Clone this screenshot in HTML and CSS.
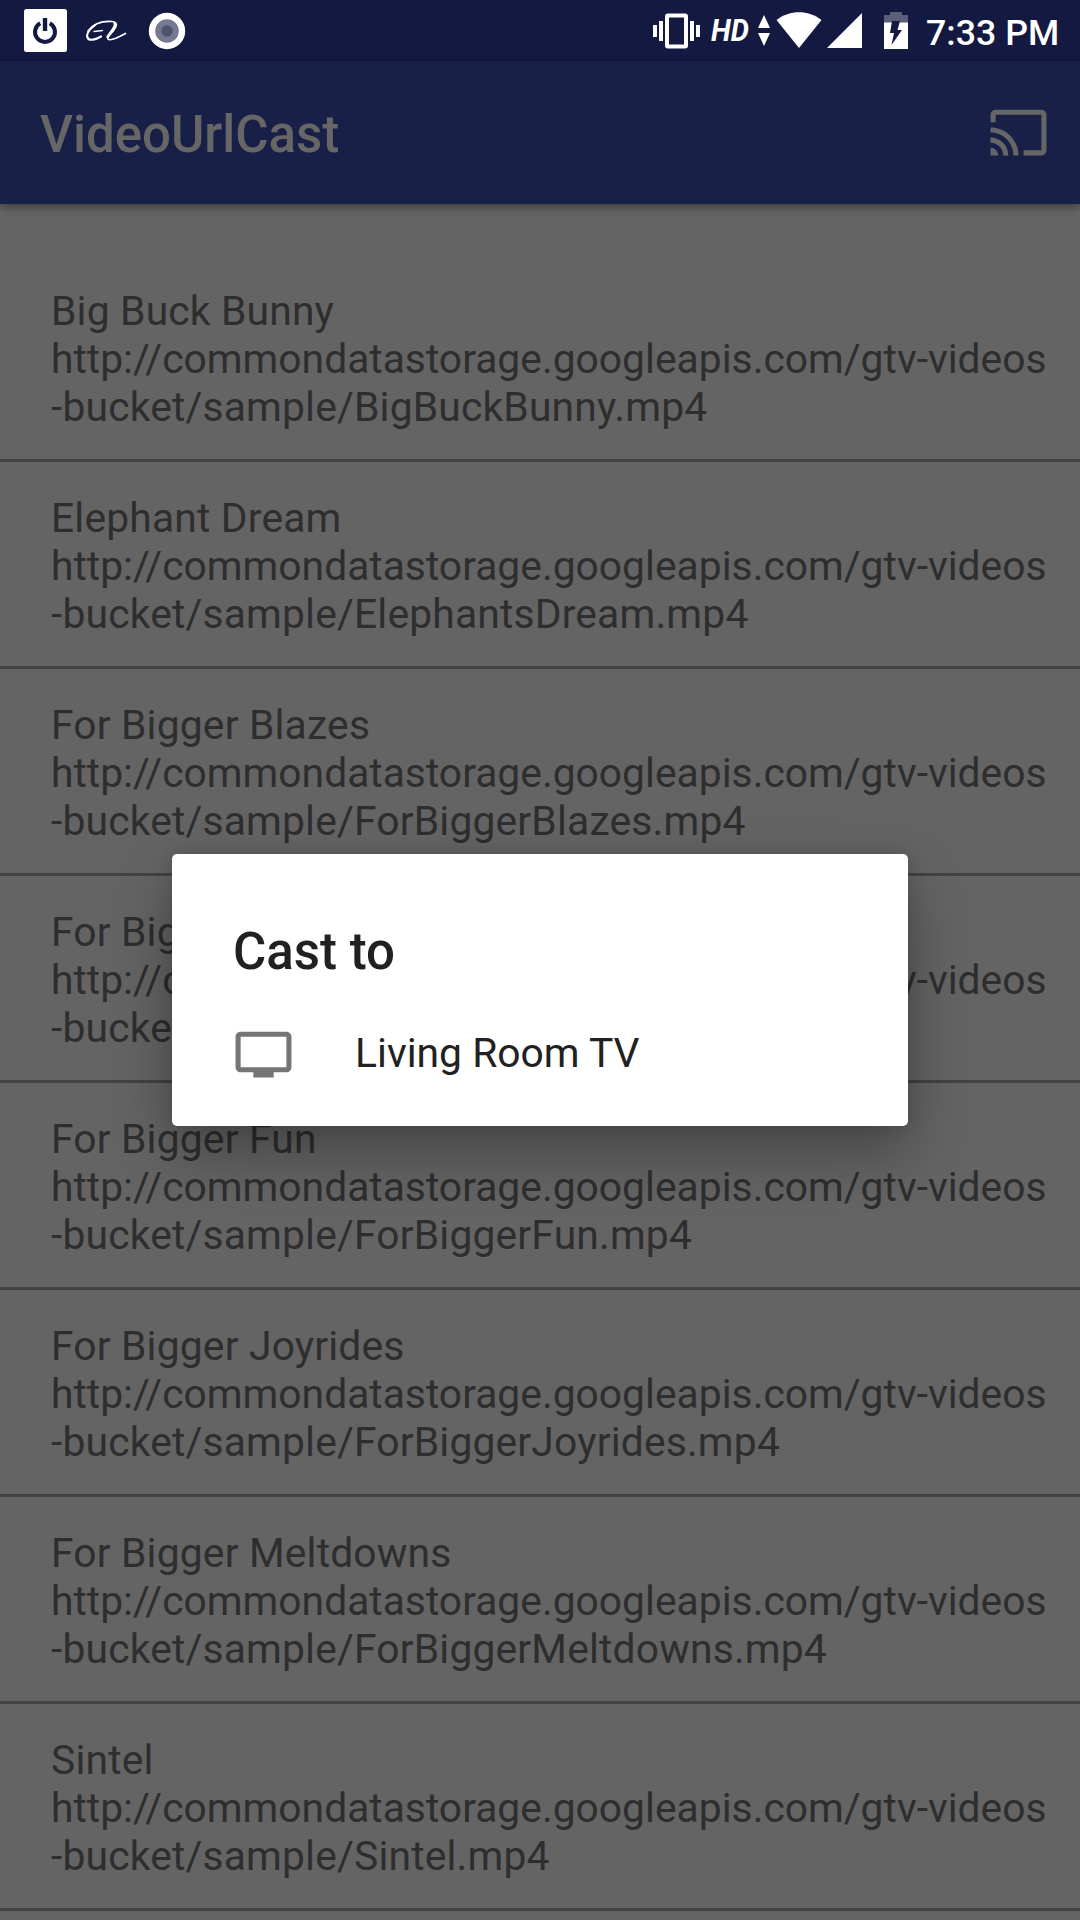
FILE: index.html
```html
<!DOCTYPE html>
<html lang="en">
<head>
<meta charset="utf-8">
<title>VideoUrlCast</title>
<link rel="stylesheet" href="styles.css">
</head>
<body>
<div class="screen">
  <header class="status">
    <div class="status-left">
      <svg class="ic-power" width="43" height="43" viewBox="0 0 43 43"><rect width="43" height="43" rx="2.5" fill="#fff"/><path d="M16.2 14.2A10 10 0 1 0 25.8 14.2" fill="none" stroke="#131940" stroke-width="4"/><path d="M21 9v13" stroke="#131940" stroke-width="4.4"/></svg>
      <svg class="ic-script" width="42" height="24" viewBox="0 0 42 24" fill="none" stroke="#fff" stroke-linecap="round" stroke-linejoin="round"><path d="M9 12.500L17.500 11.500" stroke-width="1.300"/><path d="M10 6C5 10 1 15 2.500 18.500C4 22.500 11 20.500 16 17.500" stroke-width="2.200"/><path d="M3 12C9 4 19 2 27 2.500C33 3 32 7 29 11C26 15 22 18 23 20C25 22.500 34 18 40.500 14.500" stroke-width="1.700"/><path d="M29.500 4C32 7 25 13.500 22.500 18" stroke-width="2.500"/></svg>
      <svg class="ic-disc" width="38" height="38" viewBox="0 0 38 38"><circle cx="19" cy="19" r="18.200" fill="#fff"/><circle cx="19" cy="19" r="11.800" fill="#777993"/><circle cx="19" cy="19" r="5.700" fill="#50536f"/></svg>
    </div>
    <div class="status-right">
      <svg class="ic-vibrate" width="47" height="36" viewBox="0 0 47 36" fill="#fff"><path d="M0 12h4v12H0zM6 8h4v20H6zM37 8h4v20h-4zM43 12h4v12h-4z"/><rect x="14" y="2.500" width="19" height="31" rx="1" fill="none" stroke="#fff" stroke-width="4"/></svg>
      <span class="hd">HD</span>
      <svg class="ic-arrows" width="14" height="31" viewBox="0 0 14 31" fill="#fff"><path d="M7 0L13 13H1zM1 18h12L7 31z"/></svg>
      <svg class="ic-wifi" width="46" height="36" viewBox="0 0 46 36" fill="#fff"><path d="M.5 8C14-2.300 32-2.300 45.500 8L23 36z"/></svg>
      <svg class="ic-signal" width="35" height="35" viewBox="0 0 35 35" fill="#fff"><path d="M35 0v35H0z"/></svg>
      <svg class="ic-battery" width="24" height="37" viewBox="0 0 24 37"><path d="M6 0h12v3h6v8H0V3h6z" fill="#5a5e79"/><path d="M0 10.500h24V37H0z" fill="#fff"/><path d="M8 9h8l-2.500 9H18L7.500 33l2.500-12H6z" fill="#131940"/></svg>
      <span class="clock">7:33 PM</span>
    </div>
  </header>
  <div class="appbar">
    <h1>VideoUrlCast</h1>
    <svg width="61" height="61" viewBox="0 0 24 24" fill="#666"><path d="M21 3H3c-1.100 0-2 .9-2 2v3h2V5h18v14h-7v2h7c1.100 0 2-.9 2-2V5c0-1.100-.9-2-2-2zM1 18v3h3c0-1.660-1.340-3-3-3zm0-4v2c2.760 0 5 2.240 5 5h2c0-3.870-3.130-7-7-7zm0-4v2c4.970 0 9 4.030 9 9h2c0-6.080-4.930-11-11-11z"/></svg>
  </div>
  <ul class="list">
    <li><p>Big Buck Bunny</p><p class="url">http://commondatastorage.googleapis.com/gtv-videos</p><p>-bucket/sample/BigBuckBunny.mp4</p></li>
    <li><p>Elephant Dream</p><p class="url">http://commondatastorage.googleapis.com/gtv-videos</p><p>-bucket/sample/ElephantsDream.mp4</p></li>
    <li><p>For Bigger Blazes</p><p class="url">http://commondatastorage.googleapis.com/gtv-videos</p><p>-bucket/sample/ForBiggerBlazes.mp4</p></li>
    <li><p>For Bigger Escape</p><p class="url">http://commondatastorage.googleapis.com/gtv-videos</p><p>-bucket/sample/ForBiggerEscapes.mp4</p></li>
    <li><p>For Bigger Fun</p><p class="url">http://commondatastorage.googleapis.com/gtv-videos</p><p>-bucket/sample/ForBiggerFun.mp4</p></li>
    <li><p>For Bigger Joyrides</p><p class="url">http://commondatastorage.googleapis.com/gtv-videos</p><p>-bucket/sample/ForBiggerJoyrides.mp4</p></li>
    <li><p>For Bigger Meltdowns</p><p class="url">http://commondatastorage.googleapis.com/gtv-videos</p><p>-bucket/sample/ForBiggerMeltdowns.mp4</p></li>
    <li><p>Sintel</p><p class="url">http://commondatastorage.googleapis.com/gtv-videos</p><p>-bucket/sample/Sintel.mp4</p></li>
  </ul>
  <div class="dialog">
    <h2>Cast to</h2>
    <div class="device">
      <svg width="61" height="61" viewBox="0 0 24 24" fill="#757575"><path d="M21 3H3c-1.100 0-2 .9-2 2v12c0 1.100.9 2 2 2h5v2h8v-2h5c1.100 0 2-.9 2-2V5c0-1.100-.9-2-2-2zm0 14H3V5h18v12z"/></svg>
      <span>Living Room TV</span>
    </div>
  </div>
</div>
</body>
</html>
```
FILE: styles.css
```css
* { box-sizing: border-box; }
body { margin: 0; font-family: Roboto, sans-serif; }
h1, h2, p, ul { margin: 0; padding: 0; }
h1, h2 { font-weight: 500; }
svg { display: block; flex: none; }
.screen {
  position: relative;
  width: 1080px;
  height: 1920px;
  overflow: hidden;
  background: #646464;
}
.status {
  display: flex;
  justify-content: space-between;
  height: 61px;
  background: #131940;
  color: #fff;
}
.status-left, .status-right { display: flex; align-items: flex-start; }
.status-left { padding-left: 24px; }
.ic-power { margin-top: 9px; }
.ic-script { margin: 19px 0 0 18px; }
.ic-disc { margin: 12px 0 0 21px; }
.status-right { width: 427px; }
.ic-vibrate { margin-top: 13px; }
.hd {
  width: 43px;
  margin: 14px 0 0 11px;
  font: italic 700 31px/34px Roboto, sans-serif;
  transform: scaleX(.93);
  transform-origin: left;
}
.ic-arrows { margin: 15px 0 0 3px; }
.ic-wifi { margin: 12px 0 0 5px; }
.ic-signal { margin: 13px 0 0 5px; }
.ic-battery { margin: 12px 0 0 22px; }
.clock {
  margin: 12px 0 0 18px;
  font-size: 35.7px;
  font-weight: 500;
  line-height: 42px;
  white-space: nowrap;
}
.appbar {
  position: relative;
  display: flex;
  justify-content: space-between;
  align-items: flex-start;
  height: 143px;
  padding: 41px 31px 0 40px;
  background: #192048;
  box-shadow: 0 3px 8px rgba(0, 0, 0, .4);
}
.appbar h1 { padding-top: 3px; font-size: 51px; line-height: 60px; color: #666; }
.list { padding-top: 51px; list-style: none; }
.list li {
  height: 207px;
  padding: 32px 0 0 51px;
  border-bottom: 3px solid #434343;
  font-size: 40.8px;
  line-height: 48px;
  letter-spacing: .17px;
  color: #2e2e2e;
  white-space: nowrap;
}
.list .url { letter-spacing: 0; }
.dialog {
  position: absolute;
  left: 172px;
  top: 854px;
  width: 736px;
  height: 272px;
  padding: 68px 61px 0;
  border-radius: 5px;
  background: #fff;
  color: #212121;
  box-shadow: 0 26px 60px rgba(0, 0, 0, .32), 0 0 16px rgba(0, 0, 0, .12);
}
.dialog h2 { font-size: 51px; line-height: 60px; }
.device {
  display: flex;
  align-items: center;
  gap: 61px;
  margin-top: 42px;
  font-size: 40.8px;
  line-height: 48px;
}
.device span { padding-bottom: 3px; }
```
